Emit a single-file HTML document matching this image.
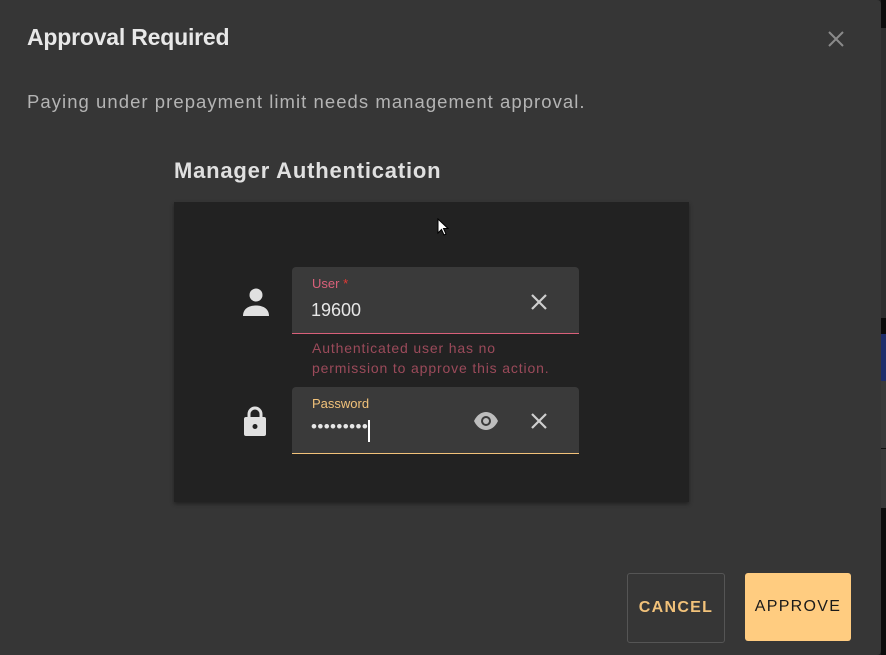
<!DOCTYPE html>
<html><head><style>
body{margin:0;width:886px;height:655px;background:#222;position:relative;overflow:hidden;font-family:"Liberation Sans",Roboto,sans-serif}
.strip{position:absolute;left:881px;width:5px}
.dlg{position:absolute;left:0;top:0;width:881px;height:655px;background:#363636;border-radius:0 4px 4px 0}
.t{position:absolute;left:27px;top:24px;font-size:23px;font-weight:bold;color:#e8e8e8;letter-spacing:-0.2px}
.p{position:absolute;left:27px;top:91px;font-size:18.5px;color:#b4b4b4;letter-spacing:1.05px;white-space:nowrap}
.h{position:absolute;left:174px;top:158px;font-size:22px;font-weight:bold;color:#e0e0e0;letter-spacing:0.8px}
.card{position:absolute;left:174px;top:202px;width:515px;height:300px;background:#222;box-shadow:0 2px 4px rgba(0,0,0,.4)}
.f{position:absolute;left:292px;width:287px;height:66px;background:#3a3a3a;border-radius:4px 4px 0 0}
.lbl{position:absolute;left:20px;top:9px;font-size:13px}
.val{position:absolute;left:19px;top:33px;font-size:18px;color:#e6e6e6}
.err{position:absolute;left:312px;top:338px;font-size:14px;line-height:20px;color:#9b4a5a;letter-spacing:0.85px;white-space:nowrap}
.btn{position:absolute;top:573px;height:68px;border-radius:3px;font-size:16px;font-weight:bold;letter-spacing:1.5px;display:flex;align-items:center;justify-content:center}
</style></head><body>
<div class="strip" style="top:0;height:28px;background:#0d0d0d"></div>
<div class="strip" style="top:28px;height:290px;background:#2e2e2e"></div>
<div class="strip" style="top:318px;height:16px;background:#0a0a0a"></div>
<div class="strip" style="top:334px;height:47px;background:#1d2d6b"></div>
<div class="strip" style="top:381px;height:67px;background:#3a3a3a"></div>
<div class="strip" style="top:448px;height:1px;background:#111"></div>
<div class="strip" style="top:449px;height:59px;background:#3a3a3a"></div>
<div class="strip" style="top:508px;height:147px;background:#0d0d0d"></div>
<div class="dlg">
<div class="t">Approval Required</div>
<svg style="position:absolute;left:827px;top:30px" width="18" height="18" viewBox="0 0 18 18"><path d="M2 2L16 16M16 2L2 16" stroke="#8a8a8a" stroke-width="2"/></svg>
<div class="p">Paying under prepayment limit needs management approval.</div>
<div class="h">Manager Authentication</div>
<div class="card"></div>
<svg style="position:absolute;left:437px;top:218px" width="12" height="18" viewBox="0 0 12 18"><path d="M1 1V15L4.5 11.5L7 17L9 16L6.5 10.5H11Z" fill="#fff" stroke="#000" stroke-width="1"/></svg>
<svg style="position:absolute;left:242px;top:287px" width="28" height="30" viewBox="0 0 28 30"><circle cx="14" cy="8" r="6.5" fill="#e0e0e0"/><path d="M1 29C1 21 8 18.5 14 18.5S27 21 27 29Z" fill="#e0e0e0"/></svg>
<div class="f" style="top:267px;border-bottom:1px solid #d9607a">
<div class="lbl" style="color:#d9607a">User <span style="color:#e53935">*</span></div>
<div class="val">19600</div>
<svg style="position:absolute;left:238px;top:26px" width="18" height="18" viewBox="0 0 18 18"><path d="M2 2L16 16M16 2L2 16" stroke="#cfcfcf" stroke-width="2.2"/></svg>
</div>
<div class="err">Authenticated user has no<br>permission to approve this action.</div>
<svg style="position:absolute;left:243px;top:405px" width="24" height="32" viewBox="0 0 24 32"><path d="M6 13V9A6 6 0 0 1 18 9V13" fill="none" stroke="#e0e0e0" stroke-width="3"/><rect x="1" y="12" width="22" height="19" rx="2" fill="#e0e0e0"/><circle cx="12" cy="21.5" r="2.5" fill="#222"/></svg>
<div class="f" style="top:387px;border-bottom:1px solid #f2c27a">
<div class="lbl" style="color:#f2c27a">Password</div>
<div class="val" style="top:30px;font-size:17px;letter-spacing:0.4px">•••••••••</div>
<div style="position:absolute;left:76px;top:33px;width:2px;height:22px;background:#fff"></div>
<svg style="position:absolute;left:181px;top:24px" width="26" height="20" viewBox="0 0 26 20"><path d="M1 10C4 3.5 9 1 13 1S22 3.5 25 10C22 16.5 17 19 13 19S4 16.5 1 10Z" fill="#bdbdbd"/><circle cx="13" cy="10" r="5" fill="#3a3a3a"/><circle cx="13" cy="10" r="3" fill="#bdbdbd"/></svg>
<svg style="position:absolute;left:238px;top:25px" width="18" height="18" viewBox="0 0 18 18"><path d="M2 2L16 16M16 2L2 16" stroke="#cfcfcf" stroke-width="2.2"/></svg>
</div>
<div class="btn" style="left:627px;width:96px;border:1px solid #555;color:#f2c27a;letter-spacing:1.3px">CANCEL</div>
<div class="btn" style="left:745px;width:106px;background:#ffcc80;color:#1a1a1a;font-weight:normal;letter-spacing:1.3px">APPROVE</div>
</div>
</body></html>
